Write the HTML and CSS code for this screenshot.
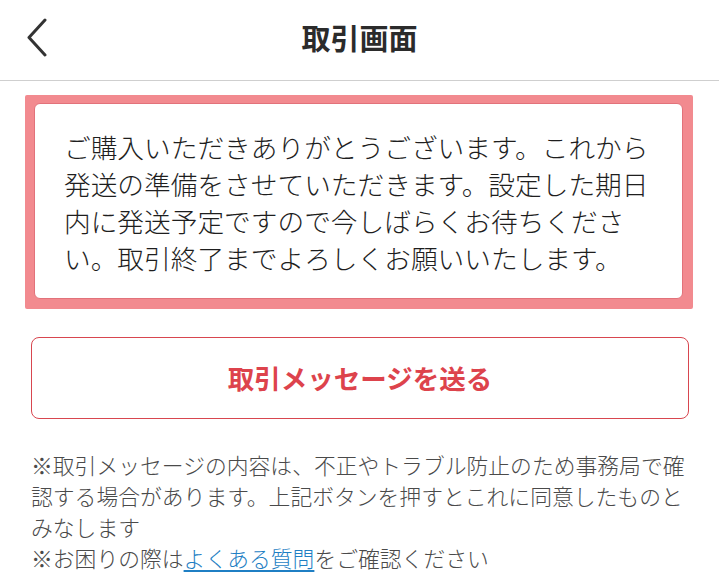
FILE: index.html
```html
<!DOCTYPE html>
<html lang="ja">
<head>
<meta charset="utf-8">
<title>取引画面</title>
<link rel="stylesheet" href="styles.css">
</head>
<body>
<header class="topbar">
  <div class="topbar-left">
    <svg class="back" width="22" height="40" viewBox="0 0 22 40" aria-hidden="true">
      <path d="M19 2 L3 19.5 L19 37" fill="none" stroke="#333" stroke-width="3" stroke-linecap="round" stroke-linejoin="round"/>
    </svg>
  </div>
  <h1 class="title">取引画面</h1>
  <div class="topbar-right"></div>
</header>
<main class="content">
  <section class="notice">
    <div class="notice-inner">
      <p class="notice-text">ご購入いただきありがとうございます。これから発送の準備をさせていただきます。設定した期日内に発送予定ですので今しばらくお待ちください。取引終了までよろしくお願いいたします。</p>
    </div>
  </section>
  <button class="send-btn" type="button">取引メッセージを送る</button>
  <div class="notes">
    <p class="note">※取引メッセージの内容は、不正やトラブル防止のため事務局で確認する場合があります。上記ボタンを押すとこれに同意したものとみなします</p>
    <p class="note">※お困りの際は<a class="link" href="#">よくある質問</a>をご確認ください</p>
  </div>
</main>
</body>
</html>
```
FILE: styles.css
```css
* { box-sizing: border-box; }
html, body { margin: 0; padding: 0; background: #fff; }
body {
  font-family: "Noto Sans CJK JP", "Noto Sans", sans-serif;
  color: #222;
}
.topbar {
  height: 81px;
  border-bottom: 1px solid #cfcfcf;
  display: grid;
  grid-template-columns: 1fr auto 1fr;
  align-items: center;
}
.topbar-left {
  padding-left: 26px;
  display: flex;
  align-items: center;
  padding-bottom: 4px;
}
.back { display: block; }
.title {
  margin: 0;
  font-size: 29px;
  font-weight: 700;
  color: #2b2b2b;
  line-height: 1;
  padding-bottom: 5px;
}
.content {
  padding: 14px 26px 0 25px;
}
.notice {
  background: #f28a8f;
  padding: 8px 10px 10px 9px;
  border-radius: 2px;
}
.notice-inner {
  background: #fff;
  border: 1.5px solid #e2727a;
  border-radius: 6px;
  padding: 24px 20px 22px 29px;
  height: 196px;
}
.notice-text {
  margin: 0;
  font-size: 26.7px;
  font-weight: 300;
  line-height: 37px;
  color: #1e1e1e;
  line-break: strict;
}
.send-btn {
  display: flex;
  align-items: center;
  justify-content: center;
  width: 658px;
  height: 82px;
  margin: 28px 0 0 6px;
  background: #fff;
  border: 1.5px solid #d8464f;
  border-radius: 8px;
  font-family: inherit;
  font-size: 26.5px;
  font-weight: 700;
  color: #dd434c;
  padding: 0 0 2px 0;
}
.notes {
  margin: 30px 0 0 6px;
  width: 660px;
}
.note {
  margin: 0;
  font-size: 21.8px;
  font-weight: 300;
  line-height: 31px;
  color: #4a4a4a;
}
.link {
  color: #1f7fc4;
  text-decoration: underline;
  text-underline-offset: 3px;
}
```
